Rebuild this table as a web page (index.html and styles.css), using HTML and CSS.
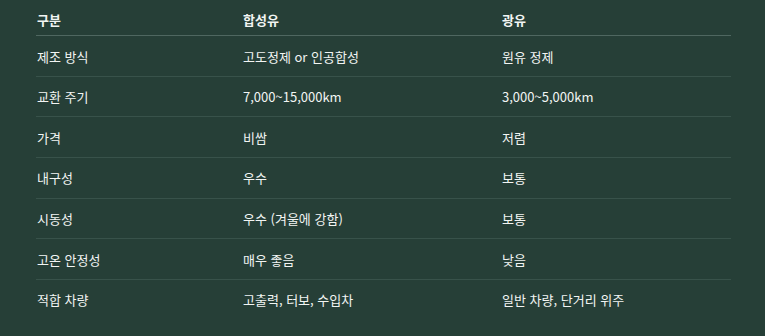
FILE: index.html
```html
<!DOCTYPE html>
<html lang="ko">
<head>
<meta charset="utf-8">
<link rel="stylesheet" href="styles.css">
</head>
<body>
<div class="wrap">
<table class="cmp">
<thead>
<tr><th class="c1">구분</th><th class="c2">합성유</th><th class="c3">광유</th></tr>
</thead>
<tbody>
<tr><td>제조 방식</td><td>고도정제 or 인공합성</td><td>원유 정제</td></tr>
<tr><td>교환 주기</td><td>7,000~15,000km</td><td>3,000~5,000km</td></tr>
<tr><td>가격</td><td>비쌈</td><td>저렴</td></tr>
<tr><td>내구성</td><td>우수</td><td>보통</td></tr>
<tr><td>시동성</td><td>우수 (겨울에 강함)</td><td>보통</td></tr>
<tr><td>고온 안정성</td><td>매우 좋음</td><td>낮음</td></tr>
<tr><td>적합 차량</td><td>고출력, 터보, 수입차</td><td>일반 차량, 단거리 위주</td></tr>
</tbody>
</table>
</div>
</body>
</html>
```
FILE: styles.css
```css
html, body {
  margin: 0;
  padding: 0;
  background: #263f37;
}
.wrap {
  padding: 4px 36px 0 36px;
  width: 692px;
}
.cmp {
  width: 692px;
  border-collapse: collapse;
  table-layout: fixed;
  font-family: "Noto Sans CJK KR", "Noto Sans", sans-serif;
  font-size: 13px;
  color: #f2f5f3;
}
.c1 { width: 205px; }
.c2 { width: 258px; }
.c3 { width: 229px; }
.cmp th {
  text-align: left;
  font-weight: 700;
  padding: 6px 0 6px 1px;
  line-height: 19px;
  border-bottom: 1px solid #4f6760;
}
.cmp td {
  text-align: left;
  padding: 10.5px 0 10.17px 1px;
  line-height: 19px;
  border-bottom: 1px solid #38524a;
}
.cmp tbody tr:last-child td {
  border-bottom: none;
}
```
